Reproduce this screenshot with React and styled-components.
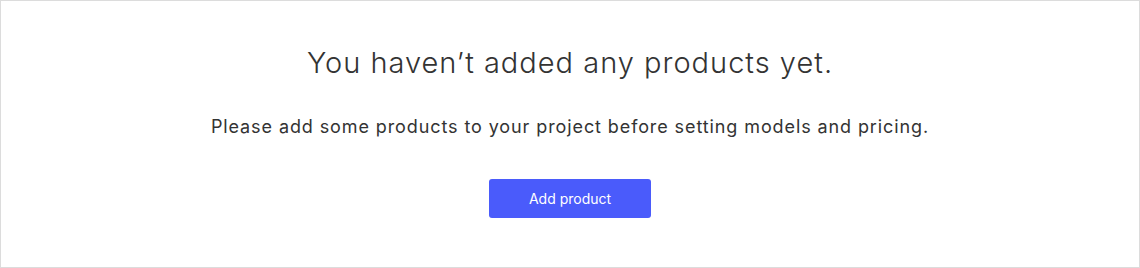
import styled, { createGlobalStyle } from 'styled-components';

const GlobalStyle = createGlobalStyle`
  html, body {
    margin: 0;
    padding: 0;
    background: #ffffff;
  }
  body {
    font-family: 'Inter', 'Noto Sans', sans-serif;
  }
`;

export default function App() {
  return (
    <>
      <GlobalStyle />
      <EmptyState>
        <Heading>You haven’t added any products yet.</Heading>
        <Description>
          Please add some products to your project before setting models and pricing.
        </Description>
        <AddButton type="button">Add product</AddButton>
      </EmptyState>
    </>
  );
}

const EmptyState = styled.div`
  box-sizing: border-box;
  width: 1140px;
  height: 268px;
  border: 1px solid #dcdcdc;
  display: flex;
  flex-direction: column;
  align-items: center;
  padding-top: 42px;
`;

const Heading = styled.h2`
  margin: 0;
  font-size: 29px;
  line-height: 40px;
  font-weight: 300;
  color: #333333;
  letter-spacing: 1px;
`;

const Description = styled.p`
  margin: 31px 0 0 0;
  font-size: 18px;
  line-height: 26px;
  font-weight: 400;
  color: #333333;
  letter-spacing: 0.9px;
`;

const AddButton = styled.button`
  margin-top: 39px;
  width: 162px;
  height: 39px;
  border: none;
  border-radius: 3px;
  background-color: #4a5bfb;
  color: #ffffff;
  font-family: 'Inter', 'Noto Sans', sans-serif;
  font-size: 14px;
  font-weight: 400;
  cursor: pointer;

  :hover {
    background-color: #3b4ce8;
  }
`;
